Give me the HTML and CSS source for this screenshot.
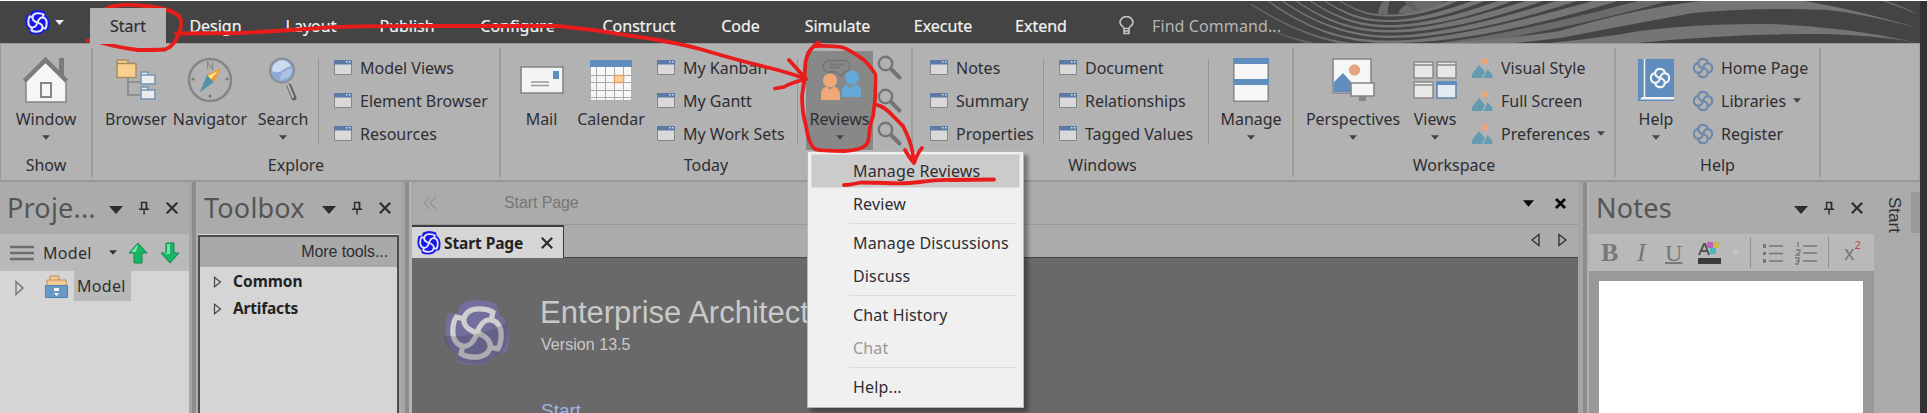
FILE: index.html
```html
<!DOCTYPE html>
<html lang="en">
<head>
<meta charset="utf-8">
<title>Enterprise Architect</title>
<link rel="stylesheet" href="styles.css">
</head>
<body>
<svg class="defs" width="0" height="0">
  <defs>
    <g id="arm4">
      <path id="arm" d="M12 12C9 11 7 9.2 7.2 7C7.5 4.5 10 3.2 12.5 3.2C15 3.2 16.800 3.700 17.800 4.500L17 8"/>
      <use href="#arm" transform="rotate(90 12 12)"/>
      <use href="#arm" transform="rotate(180 12 12)"/>
      <use href="#arm" transform="rotate(270 12 12)"/>
    </g>
    <g id="ring4">
      <path id="ring" d="M12 12C8.500 11 6.500 9 6.800 6.500C7.200 3.500 9.500 2 12 2C15 2 17.500 4 17.300 7"/>
      <use href="#ring" transform="rotate(90 12 12)"/>
      <use href="#ring" transform="rotate(180 12 12)"/>
      <use href="#ring" transform="rotate(270 12 12)"/>
    </g>
    <path id="scallop" d="M6 1.500Q12-1.500 19 1.500L20 5Q25.500 9 22.500 19L19 20Q15 25.500 5 22.500L4 19Q-1.500 15 1.500 5L5 4.500Z"/>
    <symbol id="logo" viewBox="0 0 24 24"><use href="#ring4" fill="none" stroke="currentColor" stroke-width="2.300"/></symbol>
    <symbol id="win" viewBox="0 0 18 15"><path fill="#d9d9d9" stroke="#858585" d="M.5.5h17v14H.5z"/><path fill="#5b7aa5" d="M0 0h18v4.500H0z"/><path fill="#dfe6f0" d="M12 1h1.500v1.500H12zM15 1h1.500v1.500H15z"/></symbol>
    <symbol id="mag" viewBox="0 0 26 26"><circle cx="8.500" cy="8.500" r="6.700" fill="none" stroke="#747474" stroke-width="2.400"/><path d="M14.500 14.500l8 8" stroke="#747474" stroke-width="4" stroke-linecap="round"/></symbol>
    <symbol id="pic" viewBox="0 0 21 20"><circle cx="12.500" cy="3.200" r="3.200" fill="#e9a67c"/><path fill="#649bb1" d="M0 20v-4l7-9 6 7-3 6zM11.500 20l4-9 5 6v3z"/></symbol>
    <symbol id="pin" viewBox="0 0 12 14"><path fill="none" stroke="#2d2d2d" stroke-width="1.600" d="M2.800 8V1h5.500v7M0 8.300h11M5.500 8v6"/><path stroke="#2d2d2d" stroke-width="1.500" d="M8 1v7"/></symbol>
    <symbol id="cross" viewBox="0 0 12 12"><path stroke="currentColor" stroke-width="2.200" d="M.8.8l10.400 10.400M11.200.8L.8 11.200"/></symbol>
    <symbol id="down" viewBox="0 0 14 8"><path fill="currentColor" d="M0 0h14L7 8z"/></symbol>
    <symbol id="tri" viewBox="0 0 9 14"><path fill="none" stroke="currentColor" stroke-width="1.400" d="M1 1.500v11L8 7z"/></symbol>
  </defs>
</svg>

<div class="app">
  <header class="tabbar">
    <svg class="banner" width="680" height="42" viewBox="1240 1 680 42">
      <g fill="#757575">
        <path opacity=".8" d="M1378 14Q1379 6 1383 1h7q-3 7-2 13zM1398 13q4-8 16-12h30q-4 5-14 9-16 4-32 3z"/>
        <path fill="#606060" d="M1404 1q4 7 14 11l5-1q-7-3-10-10z"/>
        <path d="M1339 0C1360 12 1370 14.500 1390 14.500S1430 9 1450 0h10C1434 12 1412 16.500 1390 16.500S1360 13 1337 0z"/>
        <path d="M1324 0C1350 16 1368 20 1390 20S1442 12 1475 0h12C1446 17 1416 22 1390 22S1350 18 1322 0z"/>
        <path d="M1310 0C1340 20 1365 25 1390 25S1450 18 1501 0h14C1460 22 1416 27.500 1390 27.500S1340 22 1308 0z"/>
        <path d="M1296 0C1330 24 1362 30 1390 30S1460 22 1529 0h17C1470 27 1420 32.500 1390 32.500S1330 26 1294 0z"/>
        <path d="M1282 0C1322 28 1360 35.500 1390 35.500S1470 28 1560 0h20C1480 33 1420 38 1390 38S1322 30 1280 0z"/>
        <path d="M1268 0C1312 32 1350 40.500 1390 40.500S1490 30 1596 0h25C1500 37 1430 43 1390 43S1312 34 1266 0z"/>
        <path opacity=".8" d="M1252 4C1300 35 1340 45.500 1390 45.500S1500 37 1642 0h30C1520 42 1440 48 1390 48S1300 37 1250 4z"/>
        <path opacity=".7" d="M1248 18q30 18 67 25h-9q-33-9-58-25z"/>
        <path d="M1425 44Q1500 40 1560 31Q1640 7 1710 0H1798Q1850 8 1918 28Q1860 13 1827 10Q1760 7 1693 13Q1627 25 1560 38Q1520 43 1500 44z"/>
        <path d="M1540 44Q1600 38 1640 31Q1700 23 1770 24Q1840 26 1915 42Q1870 35 1827 34Q1740 33 1637 43z"/>
        <path d="M1883 0q20 6 36 15q-16-7-36-14z"/>
      </g>
    </svg>
    <div class="appmenu">
      <svg width="25" height="25" viewBox="0 0 24 24"><use href="#scallop" fill="#1717e8"/><use href="#arm4" fill="none" stroke="#e4e4fa" stroke-width="2"/></svg>
      <svg width="9" height="5" class="white"><use href="#down" width="9" height="5"/></svg>
    </div>
    <nav class="tabs">
      <a class="tab active t-start">Start</a><a class="tab t-design">Design</a><a class="tab t-layout">Layout</a><a class="tab t-publish">Publish</a><a class="tab t-configure">Configure</a><a class="tab t-construct">Construct</a><a class="tab t-code">Code</a><a class="tab t-simulate">Simulate</a><a class="tab t-execute">Execute</a><a class="tab t-extend">Extend</a>
    </nav>
    <div class="find">
      <svg width="15" height="19" viewBox="0 0 15 19"><path fill="none" stroke="#c2c2c2" stroke-width="1.700" d="M5 12.500C5 10.500 1 10 1 6.300a6.300 5.500 0 0 1 13 0C14 10 10 10.500 10 12.500zM5 13v4.500h5V13M5 15h5"/></svg>
      <span>Find Command...</span>
    </div>
  </header>

  <section class="ribbon">
    <div class="group g-show">
      <div class="body">
        <div class="big b-window"><div class="ico"><svg width="46" height="46" viewBox="0 0 46 46"><path fill="#7b7b7b" d="M36 1h5v19l-5-5z"/><path fill="#f6f6f6" stroke="#858585" stroke-width="1.500" d="M3 45V23L22.500 5 43 23v22z"/><path fill="none" stroke="#7b7b7b" stroke-width="4.500" d="M1.500 24L22.500 3l21 21"/><path fill="#f6f6f6" stroke="#858585" stroke-width="2" d="M18 26h10v14H18z"/></svg></div><span>Window</span><svg class="arr"><use href="#down" width="8" height="5"/></svg></div>
      </div>
      <div class="glabel">Show</div>
    </div>

    <div class="group g-explore">
      <div class="body">
        <div class="big b-browser"><div class="ico"><svg width="40" height="42" viewBox="0 0 40 42"><path fill="none" stroke="#858585" stroke-width="1.500" d="M12 18v18h14M12 23h14"/><path fill="#f8cf8e" stroke="#a88d62" stroke-width="1.500" d="M1 18.500V1h11v3.500h8v14zM1 4.500h11"/><g fill="#ececec" stroke="#7392b4" stroke-width="1.500"><path d="M25 25V13h7v3h7v9zM25 40V28h7v3h7v9zM25 16h8M25 31h8"/></g></svg></div><span>Browser</span></div>
        <div class="big b-navigator"><div class="ico"><svg width="46" height="46" viewBox="0 0 46 46"><circle cx="23" cy="23" r="21" fill="none" stroke="#858585" stroke-width="2.500"/><path fill="none" stroke="#8a8a8a" stroke-width="1.200" d="M20.500 12V5.500l5 6.500V5.500"/><g fill="#777"><circle cx="6" cy="22" r="1.500"/><circle cx="40" cy="22" r="1.500"/><circle cx="23" cy="39" r="1.500"/></g><path fill="#5590a8" d="M13 35L20 18l7 7z"/><path fill="#f29a2e" d="M34 11L20 18l7 7z"/><path fill="#fde88c" d="M31 14L21 19l3 3z"/></svg></div><span>Navigator</span></div>
        <div class="big b-search"><div class="ico"><svg width="30" height="46" viewBox="0 0 30 46"><path stroke="#626262" stroke-width="5" stroke-linecap="round" d="M21 29l5 12"/><path stroke="#b9b9b9" stroke-width="2" stroke-linecap="round" d="M20 28l5 12"/><circle cx="14" cy="13.500" r="12" fill="#8fabd3" stroke="#878e98" stroke-width="2"/><path fill="#cbdaef" d="M4 14a10 10 0 0 1 19-5q-4 1-8 4-5 4-11 1z"/><path fill="#a9c3e6" d="M12 23q0-9 12-12 1 10-12 12z"/></svg></div><span>Search</span><svg class="arr"><use href="#down" width="8" height="5"/></svg></div>
        <div class="sep s-explore"></div>
        <div class="list l-explore">
          <div class="row"><svg class="w"><use href="#win"/></svg>Model Views</div>
          <div class="row"><svg class="w"><use href="#win"/></svg>Element Browser</div>
          <div class="row"><svg class="w"><use href="#win"/></svg>Resources</div>
        </div>
      </div>
      <div class="glabel">Explore</div>
    </div>

    <div class="group g-today">
      <div class="body">
        <div class="big b-mail"><div class="ico"><svg width="44" height="28" viewBox="0 0 44 28"><path fill="#f4f4f4" stroke="#858585" stroke-width="1.600" d="M1 1h42v26H1z"/><path fill="#5f8dbd" d="M33 5h6v8h-6z"/><path stroke="#999" stroke-width="1.400" d="M11 16h18M11 19.500h18"/></svg></div><span>Mail</span></div>
        <div class="big b-calendar"><div class="ico"><svg width="42" height="40" viewBox="0 0 42 40"><path fill="#f7f7f7" d="M1 7h40v33H1z"/><path fill="none" stroke="#a9a9a9" d="M6.500 7v33M15.500 7v33M24.500 7v33M33.500 7v33M1 15.500h40M1 22.500h40M1 30.500h40M1 37.500h40"/><path fill="#5f8dbd" d="M0 0h42v7H0z"/><path fill="#f9d2a0" stroke="#eda066" stroke-width="1.600" d="M24.500 15.500h9v7h-9z"/></svg></div><span>Calendar</span></div>
        <div class="list l-today">
          <div class="row"><svg class="w"><use href="#win"/></svg>My Kanban</div>
          <div class="row"><svg class="w"><use href="#win"/></svg>My Gantt</div>
          <div class="row"><svg class="w"><use href="#win"/></svg>My Work Sets</div>
        </div>
        <div class="sep"></div>
        <div class="big b-reviews"><div class="ico"><svg width="42" height="42" viewBox="0 0 42 42"><path fill="none" stroke="#787878" stroke-width="1.800" d="M10 1.500h15a5 5 0 0 1 0 11.500l-2 4-6-4h-7a5 5 0 0 1 0-11.500zM10 5.500h15M10 8.500h11"/><g fill="#f0a878"><circle cx="11" cy="21.500" r="7"/><path d="M2 41v-6q0-6 6-7.500l2.500 3 5-3Q21 30 21 36v5z"/></g><g fill="#62a9d9"><circle cx="33" cy="18.500" r="7"/><path d="M23 38v-5q0-6 5-8l2 4 7-4q5 2 5 8v5z"/></g></svg></div><span>Reviews</span><svg class="arr"><use href="#down" width="8" height="5"/></svg></div>
        <div class="list l-mag">
          <div class="row"><svg class="m"><use href="#mag"/></svg></div>
          <div class="row"><svg class="m"><use href="#mag"/></svg></div>
          <div class="row"><svg class="m"><use href="#mag"/></svg></div>
        </div>
      </div>
      <div class="glabel">Today</div>
    </div>

    <div class="group g-windows">
      <div class="body">
        <div class="list l-win1">
          <div class="row"><svg class="w"><use href="#win"/></svg>Notes</div>
          <div class="row"><svg class="w"><use href="#win"/></svg>Summary</div>
          <div class="row"><svg class="w"><use href="#win"/></svg>Properties</div>
        </div>
        <div class="sep"></div>
        <div class="list l-win2">
          <div class="row"><svg class="w"><use href="#win"/></svg>Document</div>
          <div class="row"><svg class="w"><use href="#win"/></svg>Relationships</div>
          <div class="row"><svg class="w"><use href="#win"/></svg>Tagged Values</div>
        </div>
        <div class="sep"></div>
        <div class="big b-manage"><div class="ico"><svg width="36" height="44" viewBox="0 0 36 44"><path fill="#f6f6f6" stroke="#858585" stroke-width="1.500" d="M.8.8h34.400v42.400H.8z"/><path fill="#5f8dbd" d="M0 0h36v6H0zM0 21h36v6H0z"/></svg></div><span>Manage</span><svg class="arr"><use href="#down" width="8" height="5"/></svg></div>
      </div>
      <div class="glabel">Windows</div>
    </div>

    <div class="group g-workspace">
      <div class="body">
        <div class="big b-persp"><div class="ico"><svg width="43" height="43" viewBox="0 0 43 43"><path fill="#f6f6f6" stroke="#858585" stroke-width="1.600" d="M1 1h38v34H1z"/><circle cx="22.500" cy="12" r="5.700" fill="#e5a77f"/><path fill="#5f8dbd" d="M2 34V24l9-9 8 9v10z"/><path fill="#f6f6f6" stroke="#858585" stroke-width="1.600" d="M19 25h23v13H19z"/><path fill="#858585" d="M27 38h7v5h-7z"/></svg></div><span>Perspectives</span><svg class="arr"><use href="#down" width="8" height="5"/></svg></div>
        <div class="big b-views"><div class="ico"><svg width="44" height="38" viewBox="0 0 44 38"><g fill="#e8e8e8" stroke="#8a8a8a" stroke-width="1.500"><path d="M1 1h19v16H1zM24 1h19v16H24zM1 21h19v16H1z"/><path d="M1 4h19M24 4h19M1 24h19"/></g><path fill="#e3e9f3" stroke="#6281aa" stroke-width="1.500" d="M24 21h19v16H24z"/><path fill="#5f8dbd" d="M23 20h21v4H23z"/></svg></div><span>Views</span><svg class="arr"><use href="#down" width="8" height="5"/></svg></div>
        <div class="list l-work">
          <div class="row"><svg class="p"><use href="#pic"/></svg>Visual Style</div>
          <div class="row"><svg class="p"><use href="#pic"/></svg>Full Screen</div>
          <div class="row"><svg class="p"><use href="#pic"/></svg>Preferences<svg class="rarr"><use href="#down" width="8" height="5"/></svg></div>
        </div>
      </div>
      <div class="glabel">Workspace</div>
    </div>

    <div class="group g-help">
      <div class="body">
        <div class="big b-help"><div class="ico"><svg width="36" height="42" viewBox="0 0 36 42"><path fill="#5f8dbd" d="M0 0h36v42H0z"/><path fill="none" stroke="#f4f4f4" stroke-width="1.500" d="M6.500 0v38"/><path fill="#f4f4f4" d="M4 38h32v2.500H2z"/><svg x="11" y="8" width="22" height="22" color="#f4f4f4"><use href="#logo"/></svg></svg></div><span>Help</span><svg class="arr"><use href="#down" width="8" height="5"/></svg></div>
        <div class="list l-help">
          <div class="row"><svg class="h"><use href="#logo"/></svg>Home Page</div>
          <div class="row"><svg class="h"><use href="#logo"/></svg>Libraries<svg class="rarr"><use href="#down" width="8" height="5"/></svg></div>
          <div class="row"><svg class="h"><use href="#logo"/></svg>Register</div>
        </div>
      </div>
      <div class="glabel">Help</div>
    </div>
  </section>

  <main class="work">
    <section class="panel project">
      <div class="ptitle"><h2>Proje...</h2><svg class="d"><use href="#down"/></svg><svg class="pn"><use href="#pin"/></svg><svg class="x"><use href="#cross"/></svg></div>
      <div class="ptools">
        <svg width="24" height="16"><path stroke="#6d6d6d" stroke-width="2.500" d="M0 2h24M0 8h24M0 14h24"/></svg>
        <span class="mname">Model</span>
        <svg class="mdrop" width="8" height="5"><use href="#down" width="8" height="5"/></svg>
        <svg class="up" width="20" height="22"><path fill="#17b765" stroke="#188450" d="M10 1l9 10h-5v10H6V11H1z"/><path fill="#7be0a6" d="M10 2L3 10h5z"/></svg>
        <svg class="dn" width="20" height="22"><path fill="#17b765" stroke="#188450" d="M10 21l9-10h-5V1H6v10H1z"/><path fill="#7be0a6" d="M7 2h3v10H3l4-1z"/></svg>
      </div>
      <div class="tree">
        <svg width="9" height="16" viewBox="0 0 9 14" preserveAspectRatio="none"><use href="#tri"/></svg>
        <svg class="case" width="23" height="23"><path fill="#f3cb95" stroke="#b88d57" d="M2 11V5h3V1h9v4h7v6zM5 5h9"/><path fill="#679ac7" stroke="#4f83b3" d="M.5 10.500h22v12H.5z"/><path fill="#f5f5f5" d="M9 13h5v3H9zM9 18h5l-2.500 3z"/></svg>
        <span class="node">Model</span>
      </div>
    </section>
    <div class="split"></div>
    <section class="panel toolbox">
      <div class="ptitle"><h2>Toolbox</h2><svg class="d"><use href="#down"/></svg><svg class="pn"><use href="#pin"/></svg><svg class="x"><use href="#cross"/></svg></div>
      <div class="box">
        <div class="more"><span>More tools...</span></div>
        <div class="cat"><svg width="9" height="12"><use href="#tri"/></svg><span class="c1">Common</span></div>
        <div class="cat"><svg width="9" height="12"><use href="#tri"/></svg><span class="c2">Artifacts</span></div>
      </div>
    </section>
    <div class="split s2"></div>
    <section class="center">
      <div class="crumb">
        <svg width="14" height="14"><path fill="none" stroke="#949494" stroke-width="1.300" d="M7 1L1 7l6 6M13 1L7 7l6 6"/></svg>
        <span class="ctext">Start Page</span>
        <svg class="cd" width="11" height="7"><use href="#down" width="11" height="7"/></svg>
        <svg class="cx" width="11" height="11" viewBox="0 0 11 11"><path stroke="#0a0a0a" stroke-width="2.800" d="M1 1l9 9M10 1l-9 9"/></svg>
      </div>
      <div class="doctabs">
        <div class="doctab"><svg width="24" height="24" viewBox="0 0 24 24"><use href="#scallop" fill="#1717e8"/><use href="#arm4" fill="none" stroke="#e4e4fa" stroke-width="1.800"/></svg><span>Start Page</span><svg class="x"><use href="#cross"/></svg></div>
        <div class="navs"><svg width="9" height="14"><g transform="matrix(-1 0 0 1 9 0)"><use href="#tri" width="9" height="14"/></g></svg><svg width="9" height="14"><use href="#tri"/></svg></div>
      </div>
      <div class="page">
        <svg class="ealogo" width="66" height="66" viewBox="0 0 24 24"><use href="#scallop" fill="#736f9d"/><use href="#arm4" fill="none" stroke="#cfcfcf" stroke-width="1.900"/><path fill="#36364a" opacity=".22" d="M0 13q13 1 23-5 1 7-2 11l-3 2q-5 4-13 1l-1-3q-4-2-4-6z"/></svg>
        <div class="words"><h1>Enterprise Architect</h1><div class="ver">Version 13.5</div><div class="go">Start</div></div>
      </div>
    </section>
    <div class="split s3"></div>
    <section class="panel notes">
      <div class="ptitle"><h2>Notes</h2><svg class="d"><use href="#down"/></svg><svg class="pn"><use href="#pin"/></svg><svg class="x"><use href="#cross"/></svg></div>
      <div class="fmt">
        <b class="fb">B</b><i class="fi">I</i><u class="fu">U</u>
        <svg class="fc" width="23" height="24"><path fill="none" stroke="#555" stroke-width="2" d="M1 14L6 3h1l4 11M3 10h7"/><path fill="#bd5fbd" d="M9 1h6v6H9z"/><path fill="#c5b84e" d="M15 1h6v6h-6z"/><path fill="#4eb5bd" d="M12 7h6v6h-6z"/><path fill="#3b3b3b" d="M0 17h23v6H0z"/></svg>
        <svg class="fd" width="9" height="5"><use href="#down" width="9" height="5"/></svg>
        <span class="fs"></span>
        <svg class="fl" width="20" height="20"><path stroke="#777" stroke-width="1.700" d="M6 3h14M6 10.500h14M6 18h14"/><path fill="#777" d="M0 1h3v4H0zM0 9h3v3H0zM0 16h3v4H0z"/></svg>
        <svg class="fn" width="22" height="24"><path stroke="#777" stroke-width="1.700" d="M8 5h14M8 12h14M8 20h14"/><path fill="none" stroke="#777" stroke-width="1.300" d="M3 1v5M1 9h4v2l-4 3h4M0 17h4v3H1h3l-1 3H0"/></svg>
        <span class="fs f2"></span>
        <span class="fx">x<sup>2</sup></span>
      </div>
      <div class="sheet"><div class="paper"></div></div>
    </section>
    <aside class="side"><span>Start</span><div class="nub"></div></aside>
  </main>
  <div class="edge"></div>

  <div class="menu">
    <div class="mi hot">Manage Reviews</div>
    <div class="mi">Review</div>
    <hr>
    <div class="mi">Manage Discussions</div>
    <div class="mi">Discuss</div>
    <hr>
    <div class="mi">Chat History</div>
    <div class="mi off">Chat</div>
    <hr>
    <div class="mi">Help...</div>
  </div>

  <svg class="ink" width="1927" height="413" viewBox="0 0 1927 413">
    <g fill="none" stroke="#e91c1c" stroke-width="3.800" stroke-linecap="round" stroke-linejoin="round">
      <path d="M88 40.500L97 41.500Q115 47 138 50Q155 50 165 49.500Q173 47 178 36Q183 25 180 17Q172 9 150 6.500Q125 3 110 7Q94 14 91.500 25Q91 36 97 41"/>
      <path d="M176 33.500L240 33Q280 31 320 28Q360 25.500 440 26L557 26Q590 29 625 35Q670 41 700 49Q740 61 770 68Q790 73 806 79M789 60L806 79Q790 83 784 87L775 88.500"/>
      <path d="M819 42.500Q808 48 805.500 62Q805 80 802 96Q802 112 806 126Q809 145 815 149Q820 151 845 151Q861 150 866 145Q869 142 869.500 131Q870 125 873 116L875 100L875.500 75Q873 69 864 60Q850 50 843 47.500Q834 45.500 815 46"/>
      <path d="M877 105Q884 106 893 116L903 126Q911 142 912.500 152L914 163M905 150Q911 160 914 163Q918 152 922 148"/>
      <path d="M844 185Q850 185 861 182.500L886 183Q905 184 920 182Q938 179.500 950 180L994 179.500"/>
    </g>
  </svg>
</div>
</body>
</html>
```
FILE: styles.css
```css
* { box-sizing: border-box; }
body { margin: 0; background: #ababab; overflow: hidden; font-family: "Noto Sans", sans-serif; font-size: 16px; color: #2e2e33; }
.defs { position: absolute; }
svg { display: block; flex: none; }
h1, h2 { margin: 0; font-weight: 400; }
.app { position: relative; width: 1927px; height: 413px; border-top: 1px solid #fff; overflow: hidden; white-space: nowrap; display: grid; grid-template: 42px 139px 231px / 1920px 7px; }
.edge { grid-area: 1 / 2 / 4 / 3; background: #333; }

.tabbar { grid-area: 1 / 1; position: relative; background: #444; display: flex; border-bottom: 0; }
.banner { position: absolute; right: 0; top: 0; }
.appmenu { width: 90px; padding: 9px 0 0 25px; display: flex; gap: 5px; color: #eee; }
.appmenu .white { margin-top: 10px; }
.tabs { display: flex; }
.tab { display: flex; justify-content: center; padding-top: 7px; line-height: 36px; color: #f2f2f2; -webkit-text-stroke: .2px; }
.tab.active { background: #b2b2b2; color: #2e2e33; margin-top: 7px; padding-top: 0; height: 36px; z-index: 1; }
.t-start { width: 76px; } .t-design { width: 99px; } .t-layout { width: 92px; } .t-publish { width: 100px; } .t-configure { width: 121px; }
.t-construct { width: 122px; } .t-code { width: 81px; } .t-simulate { width: 113px; } .t-execute { width: 98px; } .t-extend { width: 98px; }
.find { display: flex; align-items: center; gap: 18px; padding-left: 29px; padding-top: 7px; color: #b5b5b5; position: relative; letter-spacing: .1px; }

.ribbon { grid-area: 2 / 1; background: #b2b2b2; border: 1px solid #999; border-bottom: 2px solid #989898; border-right-color: #a5a5a5; display: flex; }
.group { display: flex; flex-direction: column; position: relative; border-right: 2px solid #9c9c9c; margin: 4px 0 3px; }
.g-show { width: 92px; } .g-explore { width: 408px; } .g-today { width: 412px; } .g-windows { width: 381px; } .g-workspace { width: 322px; } .g-help { width: 205px; }
.body { display: flex; height: 102px; }
.glabel { text-align: center; line-height: 30px; }
.big { display: flex; flex-direction: column; align-items: center; height: 99px; margin-top: 3px; }
.ico { height: 55px; display: flex; align-items: center; padding-top: 2px; }
.big span { line-height: 26px; }
.arr { width: 8px; height: 5px; margin-top: 3px; color: #444; }
.rarr { width: 8px; height: 5px; margin-left: 7px; color: #444; }
.b-window { width: 92px; }
.b-browser { width: 66px; margin-left: 10px; } .b-navigator { width: 82px; } .b-search { width: 64px; }
.b-mail { width: 65px; margin-left: 8px; } .b-calendar { width: 74px; }
.b-reviews { width: 67px; margin-left: 8px; background: #888; }
.b-manage { width: 76px; margin-left: 4px; }
.b-persp { width: 100px; margin-left: 9px; } .b-views { width: 64px; }
.b-help { width: 64px; margin-left: 8px; }
.sep { width: 1px; background: #949494; margin: 11px 0 6px; }
.s-explore { margin-left: 3px; }
.list { padding-top: 3px; }
.row { display: flex; align-items: center; height: 33px; }
.l-explore { margin-left: 15px; } .l-today { margin-left: 9px; width: 140px; } .l-mag { margin-left: 4px; }
.l-win1 { margin-left: 17px; width: 113px; } .l-win2 { margin-left: 15px; width: 149px; }
.l-work { margin-left: 5px; } .l-help { margin-left: 5px; }
.w { width: 18px; height: 15px; margin-right: 8px; }
.m { width: 26px; height: 26px; }
.p { width: 21px; height: 20px; margin-right: 8px; }
.h { width: 22px; height: 22px; margin: 0 7px 0 -1px; color: #6c88ad; }

.work { grid-area: 3 / 1; display: flex; background: #ababab; }
.split { width: 8px; border-left: 3px solid #a5a5a5; border-right: 1px solid #b3b3b3; background: #8d8d8d; }
.s2 { width: 10px; margin-left: 0; border-right-width: 3px; }
.s3 { width: 11px; border-left-width: 5px; border-right-width: 2px; }
.panel { display: flex; flex-direction: column; }
.project { width: 189px; }
.toolbox { width: 205px; }
.notes { width: 285px; }
.ptitle { height: 52px; display: flex; align-items: center; padding-left: 7px; }
.ptitle h2 { font-size: 27px; color: #555; line-height: 52px; width: 102px; letter-spacing: .2px; }
.ptitle .d { width: 14px; height: 8px; color: #2d2d2d; margin-top: 4px; }
.ptitle .pn { width: 11px; height: 14px; margin-left: 16px; }
.x { width: 12px; height: 12px; color: #2d2d2d; }
.ptitle .x { margin-left: 16px; }
.toolbox .ptitle h2 { width: 118px; }
.notes .ptitle h2 { width: 198px; }
.ptools { height: 37px; background: #b9b9b9; display: flex; align-items: center; padding-left: 10px; }
.mname { margin-left: 9px; width: 67px; letter-spacing: .3px; }
.mdrop { color: #333; margin-left: -1px; margin-right: 11px; }
.dn { margin-left: 12px; }
.tree { flex: 1; background: #d5d5d5; display: flex; align-items: flex-start; padding-left: 15px; }
.tree > svg { margin-top: 9px; color: #777; }
.tree .case { margin: 4px 6px 0 21px; }
.node { background: #b9b9b9; height: 30px; line-height: 30px; padding: 0 3px; width: 57px; letter-spacing: .3px; }
.box { flex: 1; border: 2px solid #4d4d4d; border-bottom: 0; background: #d5d5d5; margin: 1px 3px 0 1px; box-shadow: 0 -1px #d5d5d5; }
.more { height: 30px; background: #a9a9a9; text-align: right; padding-right: 9px; font: 16px/29px "Liberation Sans", sans-serif; letter-spacing: -.1px; margin-bottom: 0; }
.cat { height: 27px; display: flex; align-items: center; gap: 11px; padding-left: 13px; font-weight: 700; color: #222; font-size: 15.5px; }
.cat svg { margin-top: 2px; color: #444; }
.c2 { letter-spacing: -.2px; }

.center { width: 1166px; display: flex; flex-direction: column; }
.crumb { height: 43px; display: flex; align-items: center; padding-left: 10px; border-bottom: 1px solid #999; border-left: 1px solid #a0a0a0; }
.ctext { font: 16px "Liberation Sans", sans-serif; color: #777; margin-left: 67px; flex: 1; letter-spacing: -.1px; }
.cd { color: #0a0a0a; margin-right: 21px; }
.cx { margin-right: 12px; }
.doctabs { height: 33px; display: flex; justify-content: space-between; border-bottom: 1px solid #444; }
.doctab { width: 152px; height: 33px; border-top: 2px solid #3c3c3c; border-right: 1px solid #3c3c3c; background: #d5d5d5; display: flex; align-items: center; padding-left: 5px; gap: 3px; font-weight: 700; font-size: 15.5px; color: #222; z-index: 1; }
.doctab span { width: 94px; letter-spacing: -.1px; }
.navs { display: flex; gap: 18px; margin: 8px 11px 0 0; color: #333; }
.page { flex: 1; background: #696969; display: flex; overflow: hidden; padding-left: 32px; }
.ealogo { margin-top: 42px; }
.words { margin-left: 30px; font-family: "Liberation Sans", sans-serif; color: #c9c9c9; height: 155px; }
.words h1 { font-size: 31px; line-height: 36px; margin-top: 37px; }
.ver { font-size: 16px; line-height: 20px; margin-top: 4px; margin-left: 1px; letter-spacing: .05px; }
.go { font-size: 19px; line-height: 22px; margin-top: 45px; margin-left: 1px; color: #9fb6e4; }

.fmt { height: 37px; background: #b9b9b9; display: flex; align-items: center; color: #777; font: 26px/36px "Liberation Serif", serif; }
.fb { width: 36px; padding-left: 12px; } .fi { width: 36px; margin-left: 0; padding-left: 12px; } .fu { width: 37px; padding-left: 4px; font-size: 24px; text-decoration-thickness: 1.500px; }
.fd { color: #c6c6c6; margin-left: 10px; } .fs { width: 1px; height: 31px; background: #909090; margin-left: 10px; }
.fl { margin-left: 12px; } .fn { margin-left: 12px; } .f2 { margin-left: 11px; }
.fx { margin-left: 15px; font: 20px/36px "Noto Sans", sans-serif; }
.fx sup { font-size: 11px; color: #b54c4c; position: relative; top: -3px; line-height: 0; }
.sheet { flex: 1; background: #999; padding: 10px 11px 0 10px; }
.paper { background: #fff; height: 100%; }
.side { flex: 1; display: flex; justify-content: space-between; padding-left: 10px; }
.side span { writing-mode: vertical-rl; font: 17px/20px "Liberation Sans", sans-serif; margin-top: 15px; }
.nub { width: 9px; height: 41px; background: #999; margin-top: 10px; }

.menu { position: absolute; left: 807px; top: 150px; width: 217px; height: 257px; background: #f0f0f0; border: 1px solid #b8b8b8; padding: 2px 3px; box-shadow: 4px 4px 4px rgba(0,0,0,.35); }
.mi { height: 33px; line-height: 33px; padding-left: 42px; letter-spacing: .15px; }
.mi.hot { background: #cbcbcb; border: 1px solid #dcdcdc; line-height: 32px; padding-left: 41px; height: 34px; }
.mi.off { color: #999; }
.menu hr { margin: 2px 3px 3px 38px; border: 0; border-top: 1px solid #ddd; }
.ink { position: absolute; left: 0; top: -1px; }
```
